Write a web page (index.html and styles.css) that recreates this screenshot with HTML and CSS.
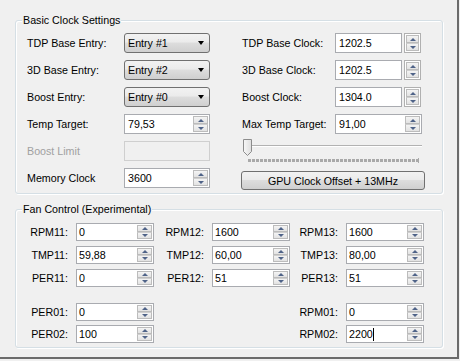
FILE: index.html
```html
<!DOCTYPE html>
<html lang="en">
<head>
    <meta charset="UTF-8">
    <title>Clock Settings</title>
    <link rel="stylesheet" href="styles.css">
</head>
<body>

<div class="window">

    <div class="group basic">
        <span class="group-title">Basic Clock Settings</span>

        <div class="col-left">
            <span class="lbl">TDP Base Entry:</span>
            <div class="combo"><span>Entry #1</span><span class="caret"></span></div>

            <span class="lbl">3D Base Entry:</span>
            <div class="combo"><span>Entry #2</span><span class="caret"></span></div>

            <span class="lbl">Boost Entry:</span>
            <div class="combo"><span>Entry #0</span><span class="caret"></span></div>

            <span class="lbl">Temp Target:</span>
            <div class="field num"><span class="val">79,53</span><span class="spin"><i class="up"></i><i class="down"></i></span></div>

            <span class="lbl disabled">Boost Limit</span>
            <div class="field off"></div>

            <span class="lbl">Memory Clock</span>
            <div class="field num"><span class="val">3600</span><span class="spin"><i class="up"></i><i class="down"></i></span></div>
        </div>

        <div class="col-right">
            <div class="row">
                <span class="lbl wide">TDP Base Clock:</span>
                <div class="field short"><span class="val">1202.5</span></div>
                <span class="spin alone"><i class="up"></i><i class="down"></i></span>
            </div>
            <div class="row">
                <span class="lbl wide">3D Base Clock:</span>
                <div class="field short"><span class="val">1202.5</span></div>
                <span class="spin alone"><i class="up"></i><i class="down"></i></span>
            </div>
            <div class="row">
                <span class="lbl wide">Boost Clock:</span>
                <div class="field short"><span class="val">1304.0</span></div>
                <span class="spin alone"><i class="up"></i><i class="down"></i></span>
            </div>
            <div class="row">
                <span class="lbl wide">Max Temp Target:</span>
                <div class="field num long"><span class="val">91,00</span><span class="spin"><i class="up"></i><i class="down"></i></span></div>
            </div>

            <div class="slider">
                <div class="track"></div>
                <svg class="thumb" width="11" height="18" viewBox="0 0 11 18">
                    <defs>
                        <linearGradient id="tg" x1="0" y1="0" x2="1" y2="0">
                            <stop offset="0" stop-color="#f7f7f7"/>
                            <stop offset="1" stop-color="#dedede"/>
                        </linearGradient>
                    </defs>
                    <path d="M1.5 0.5 H9.5 V12.5 L5.5 16.5 L1.5 12.5 Z" fill="url(#tg)" stroke="#8c8c8c"/>
                </svg>
                <div class="ticks"></div>
            </div>

            <button class="btn">GPU Clock Offset + 13MHz</button>
        </div>
    </div>

    <div class="group fan">
        <span class="group-title">Fan Control (Experimental)</span>

        <div class="fan-grid">
            <span class="fl">RPM11:</span>
            <div class="field sm num"><span class="val">0</span><span class="spin"><i class="up"></i><i class="down"></i></span></div>
            <span class="fl">RPM12:</span>
            <div class="field sm num"><span class="val">1600</span><span class="spin"><i class="up"></i><i class="down"></i></span></div>
            <span class="fl">RPM13:</span>
            <div class="field sm num"><span class="val">1600</span><span class="spin"><i class="up"></i><i class="down"></i></span></div>

            <span class="fl">TMP11:</span>
            <div class="field sm num"><span class="val">59,88</span><span class="spin"><i class="up"></i><i class="down"></i></span></div>
            <span class="fl">TMP12:</span>
            <div class="field sm num"><span class="val">60,00</span><span class="spin"><i class="up"></i><i class="down"></i></span></div>
            <span class="fl">TMP13:</span>
            <div class="field sm num"><span class="val">80,00</span><span class="spin"><i class="up"></i><i class="down"></i></span></div>

            <span class="fl">PER11:</span>
            <div class="field sm num"><span class="val">0</span><span class="spin"><i class="up"></i><i class="down"></i></span></div>
            <span class="fl">PER12:</span>
            <div class="field sm num"><span class="val">51</span><span class="spin"><i class="up"></i><i class="down"></i></span></div>
            <span class="fl">PER13:</span>
            <div class="field sm num"><span class="val">51</span><span class="spin"><i class="up"></i><i class="down"></i></span></div>
        </div>

        <div class="fan-grid low">
            <span class="fl">PER01:</span>
            <div class="field sm num"><span class="val">0</span><span class="spin"><i class="up"></i><i class="down"></i></span></div>
            <span class="skip"></span>
            <span class="fl">RPM01:</span>
            <div class="field sm num"><span class="val">0</span><span class="spin"><i class="up"></i><i class="down"></i></span></div>

            <span class="fl">PER02:</span>
            <div class="field sm num"><span class="val">100</span><span class="spin"><i class="up"></i><i class="down"></i></span></div>
            <span class="skip"></span>
            <span class="fl">RPM02:</span>
            <div class="field sm num"><span class="val">2200<span class="cursor"></span></span><span class="spin"><i class="up"></i><i class="down"></i></span></div>
        </div>
    </div>

</div>

</body>
</html>
```

FILE: styles.css
```css
body {
    margin: 0;
    background: #f0f0f0;
    font-family: 'Liberation Sans', Arial, sans-serif;
    font-size: 10.7px;
    color: #000;
}

.window {
    width: 459px;
    height: 359px;
    box-sizing: border-box;
    padding: 20px 0 0 15px;
    border-right: 2px solid #6b6b6b;
    border-bottom: 2px solid #6b6b6b;
}

/* group boxes */

.group {
    position: relative;
    width: 428px;
    box-sizing: border-box;
    border: 1px solid #d5dfe5;
    border-radius: 3px;
    box-shadow: 1px 1px 0 #fff, inset 1px 1px 0 #fff;
}

.group-title {
    position: absolute;
    top: -7px;
    left: 6px;
    padding: 0 1px;
    line-height: 13px;
    background: #f0f0f0;
}

.basic {
    height: 174px;
    padding: 12px 0 0 11px;
    display: flex;
}

.fan {
    height: 139px;
    margin-top: 15px;
    padding-top: 13px;
}

/* basic clock columns */

.col-left {
    display: grid;
    grid-template-columns: 97px 86px;
    grid-auto-rows: 20px;
    row-gap: 7px;
    align-items: center;
    align-content: start;
}

.col-right {
    margin-left: 32px;
    display: flex;
    flex-direction: column;
}

.row {
    display: flex;
    align-items: center;
    height: 20px;
    margin-bottom: 7px;
}

.lbl.wide {
    width: 93px;
}

.lbl.disabled {
    color: #a0a0a0;
}

/* controls */

.combo {
    height: 20px;
    box-sizing: border-box;
    border: 1px solid #707070;
    border-radius: 3px;
    background: linear-gradient(#f2f2f2, #ebebeb 45%, #dddddd 50%, #cfcfcf);
    display: flex;
    align-items: center;
    justify-content: space-between;
    padding: 0 5px 0 3px;
}

.caret {
    width: 0;
    height: 0;
    border-left: 3.5px solid transparent;
    border-right: 3.5px solid transparent;
    border-top: 4px solid #000;
}

.field {
    height: 20px;
    box-sizing: border-box;
    border: 1px solid #a9abb0;
    background: #fff;
    display: flex;
    align-items: center;
    padding-left: 3px;
}

.field.off {
    background: #f0f0f0;
    border-color: #cfcfcf;
}

.field.short {
    width: 67px;
}

.field.long {
    width: 87px;
}

.field.num {
    padding-right: 0;
}

.field .val {
    flex: 1;
    display: flex;
    align-items: center;
}

.field.sm {
    height: 18px;
    padding-left: 2px;
}

.cursor {
    display: inline-block;
    width: 1px;
    height: 13px;
    background: #000;
}

/* spinner buttons */

.spin {
    width: 15px;
    align-self: stretch;
    margin: 1px;
    display: flex;
    flex-direction: column;
}

.spin i {
    flex: 1;
    border: 1px solid #bcbcbc;
    background: linear-gradient(#f4f4f4, #e2e2e2);
    display: flex;
    align-items: center;
    justify-content: center;
}

.spin i.down {
    border-top-color: #cfcfcf;
}

.spin i::before {
    content: '';
    width: 0;
    height: 0;
    border-left: 3px solid transparent;
    border-right: 3px solid transparent;
}

.spin i.up::before {
    border-bottom: 3px solid #4f6388;
}

.spin i.down::before {
    border-top: 3px solid #4f6388;
}

.spin.alone {
    width: 17px;
    height: 20px;
    box-sizing: border-box;
    margin: 0 0 0 2px;
    padding: 1px;
    border: 1px solid #b0b0b0;
    background: #fff;
}

/* slider */

.slider {
    position: relative;
    width: 180px;
    height: 24px;
    margin-top: -2px;
}

.track {
    position: absolute;
    left: 4px;
    right: 0;
    top: 6px;
    height: 1px;
    background: #b2b2b2;
    border-bottom: 1px solid #fff;
}

.thumb {
    position: absolute;
    left: 0;
    top: 0;
}

.ticks {
    position: absolute;
    left: 6px;
    top: 20px;
    width: 170px;
    height: 3px;
    background: repeating-linear-gradient(to right, #a9a9a9 0 3px, transparent 3px 4px);
}

.ticks::after {
    content: '';
    position: absolute;
    right: -1px;
    top: -1px;
    width: 1px;
    height: 5px;
    background: #a9a9a9;
}

.btn {
    margin: 8px 0 0 -1px;
    width: 184px;
    height: 19px;
    padding: 0;
    border: 1px solid #707070;
    border-radius: 3px;
    background: linear-gradient(#f2f2f2, #ebebeb 45%, #dddddd 50%, #cfcfcf);
    font: inherit;
    color: #000;
}

/* fan control grid */

.fan-grid {
    display: grid;
    grid-template-columns: 60px 78px 58px 78px 56px 78px;
    grid-auto-rows: 18px;
    row-gap: 5px;
    align-items: center;
}

.fan-grid.low {
    margin-top: 16px;
    row-gap: 4px;
}

.fl {
    text-align: right;
    padding-right: 8px;
}

.skip {
    grid-column: span 2;
}
```
